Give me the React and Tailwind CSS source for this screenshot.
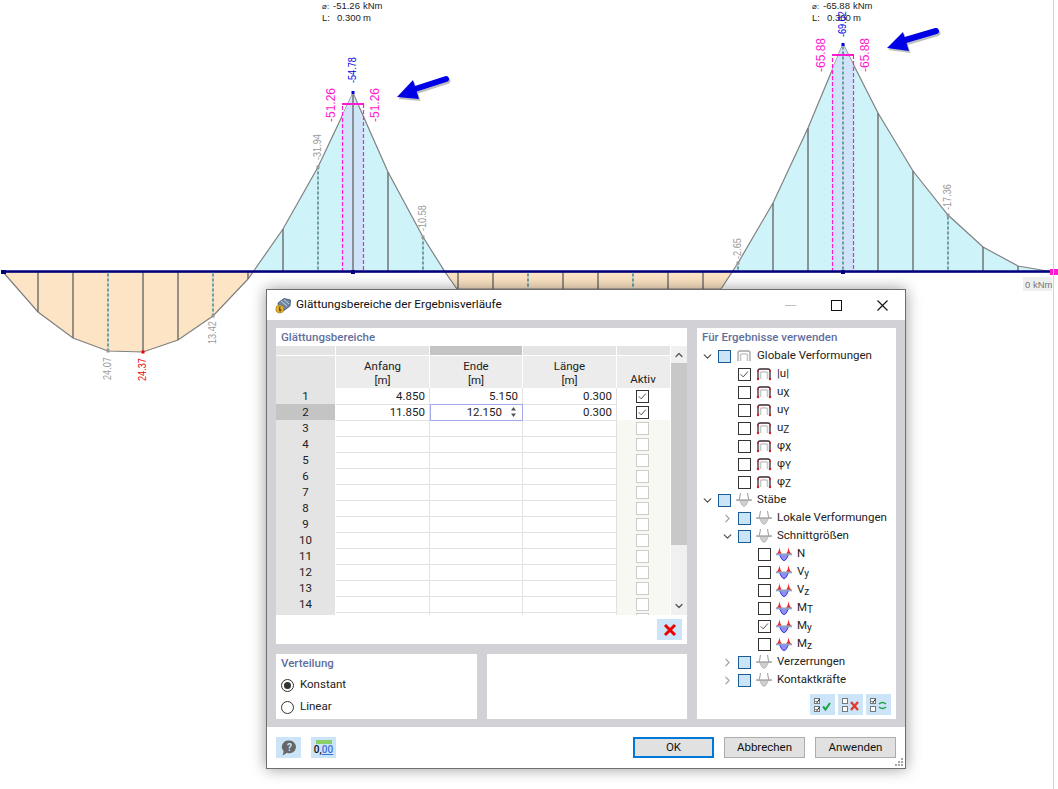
import React from "react";
import { ChevronDown, ChevronRight, ChevronUp } from "lucide-react";

const BASE = 271.5;

// values read off the diagram: [x, y, dashed]
const leftHump = [[38, 312], [73, 338], [108, 351, true], [143, 352], [178, 340], [213, 316, true], [248, 279]];
const midHump = [[283, 229], [318, 167, true], [353, 93], [388, 172], [423, 237, true]];
const flatPart = [[458, 289], [493, 289], [528, 289, true], [563, 289], [598, 289], [633, 289, true], [668, 289], [703, 289]];
const rightHump = [[738, 263, true], [773, 203], [808, 128], [843, 44, true], [878, 113], [913, 171], [948, 215, true], [983, 247], [1018, 266]];

const Verticals = ({ items }) =>
  items.map(([x, y, dashed]) => (
    <g key={x}>
      <line x1={x} y1={BASE} x2={x} y2={y} stroke={dashed ? "#3d7f84" : "#6b6b6b"} strokeWidth="1.4" />
      {dashed && <line x1={x} y1={BASE} x2={x} y2={y} stroke="#fff" strokeWidth="1.4" strokeDasharray="2 3" />}
    </g>
  ));

const VText = ({ x, y, size = 10.5, squeeze = 0.87, color = "#9a9a9a", children }) => (
  <text
    transform={`translate(${x} ${y}) rotate(-90) scale(${squeeze} 1)`}
    fontSize={size}
    fill={color}
    dominantBaseline="middle"
  >
    {children}
  </text>
);

const Arrow = ({ points, from, to }) => (
  <g>
    <g transform="translate(1.5 2)" opacity="0.25">
      <line x1={from[0]} y1={from[1]} x2={to[0]} y2={to[1]} stroke="#000" strokeWidth="6" strokeLinecap="round" />
      <polygon points={points} fill="#000" />
    </g>
    <line x1={from[0]} y1={from[1]} x2={to[0]} y2={to[1]} stroke="#0000e6" strokeWidth="6" strokeLinecap="round" />
    <polygon points={points} fill="#0000e6" />
  </g>
);

const Diagram = () => (
  <svg className="absolute inset-0 font-['Liberation_Sans',sans-serif]" width="1058" height="789" viewBox="0 0 1058 789">
    <line x1="1053.5" y1="0" x2="1053.5" y2="789" stroke="#d4d4d4" />

    <polygon points="3,272 38,312 73,338 108,351 143,352 178,340 213,316 248,279 253,272" fill="#fce4c4" stroke="#808080" strokeWidth="1.2" />
    <polygon points="445,272 457,289 721,289 732,272" fill="#fce4c4" stroke="#808080" strokeWidth="1.2" />
    <polygon points="253,272 283,229 318,167 353,93 388,172 423,237 445,272" fill="#cef3f9" stroke="#808080" strokeWidth="1.2" />
    <polygon points="732,272 738,263 773,203 808,128 843,44 878,113 913,171 948,215 983,247 1018,266 1053,272" fill="#cef3f9" stroke="#808080" strokeWidth="1.2" />
    <polygon points="342,272 342,116 353,93 363,121 363,272" fill="#cfe4f8" />
    <polygon points="832,272 832,70 843,44 853,64 853,272" fill="#cfe4f8" />

    <Verticals items={leftHump} />
    <Verticals items={midHump} />
    <Verticals items={flatPart} />
    <Verticals items={rightHump} />

    {/* smoothing areas */}
    <g stroke="#ff19d0" strokeWidth="1.2" fill="none" strokeDasharray="4 2">
      <path d="M342.5 272V104M363.5 104V272" />
      <path d="M832.5 272V55M853.5 55V272" />
    </g>
    <path d="M342 104H364M832 55H854" stroke="#ff19d0" strokeWidth="2" />

    <line x1="3" y1={BASE} x2="1053" y2={BASE} stroke="#00007f" strokeWidth="2.4" />

    <rect x="1" y="270" width="5" height="4" fill="#00007f" />
    <rect x="351" y="270" width="4" height="4" fill="#00007f" />
    <rect x="841" y="270" width="4" height="4" fill="#00007f" />
    <rect x="351.5" y="91" width="3" height="3" fill="#0000e6" />
    <rect x="841.5" y="43" width="3" height="3" fill="#0000e6" />
    <rect x="141.5" y="350.5" width="3" height="3" fill="#f00000" />
    {[[108, 351], [213, 316], [318, 167], [423, 237], [738, 263], [948, 215]].map(([x, y]) => (
      <rect key={x} x={x - 1.5} y={y - 1.5} width="3" height="3" fill="#999" />
    ))}
    <rect x="1050" y="269" width="3" height="6" fill="#ff19d0" />
    <rect x="1054" y="269" width="4" height="6" fill="#ff19d0" />

    <g fontSize="9.5" fill="#222">
      <text x="322" y="9" fontSize="8">⌀:</text>
      <text x="333" y="9">-51.26</text>
      <text x="363" y="9">kNm</text>
      <text x="322" y="21">L:</text>
      <text x="337" y="21">0.300</text>
      <text x="363" y="21">m</text>
      <text x="812" y="9" fontSize="8">⌀:</text>
      <text x="823" y="9">-65.88</text>
      <text x="853" y="9">kNm</text>
      <text x="812" y="21">L:</text>
      <text x="827" y="21">0.300</text>
      <text x="853" y="21">m</text>
    </g>

    <VText x={353} y={83} color="#0000e6">-54.78</VText>
    <VText x={843} y={37} color="#0000e6">-69.02</VText>
    <VText x={331.5} y={122} size={12} squeeze={1} color="#ff19d0">-51.26</VText>
    <VText x={375.5} y={122} size={12} squeeze={1} color="#ff19d0">-51.26</VText>
    <VText x={821.5} y={72} size={12} squeeze={1} color="#ff19d0">-65.88</VText>
    <VText x={865.5} y={72} size={12} squeeze={1} color="#ff19d0">-65.88</VText>
    <VText x={318} y={160}>-31.94</VText>
    <VText x={423} y={231}>-10.58</VText>
    <VText x={738} y={259}>-2.65</VText>
    <VText x={948} y={210}>-17.36</VText>
    <VText x={108} y={380}>24.07</VText>
    <VText x={143} y={381} color="#f00000">24.37</VText>
    <VText x={213} y={344}>13.42</VText>

    <Arrow from={[446, 79]} to={[412, 90]} points="397,97 413,80 419,99" />
    <Arrow from={[936, 31]} to={[902, 41]} points="887,48 903,32 909,51" />

    <rect x="1023" y="277" width="29" height="14" fill="#efefef" />
    <text x="1025" y="288" fontSize="9.5" fill="#777">0 kNm</text>
  </svg>
);

const Check = ({ className = "stroke-[#444]" }) => (
  <svg viewBox="0 0 13 13" className="w-full h-full">
    <path d="M2 6.3 5 9.3 10.5 3" fill="none" strokeWidth="1.1" className={className} />
  </svg>
);

const CheckBox = ({ checked, disabled }) => (
  <span
    className={`block w-[13px] h-[13px] shrink-0 border bg-white ${
      disabled ? "border-[#cccccc]" : "border-[#333333]"
    }`}
  >
    {checked && <Check />}
  </span>
);

const TriBox = () => <span className="block w-[13px] h-[13px] shrink-0 border border-[#1b5c96] bg-[#cce4f7]" />;

const FrameIcon = ({ active }) => (
  <svg width="16" height="14" viewBox="0 0 16 14" className="shrink-0">
    <path d="M4.5 12V5.5Q8 4 11.5 5.5V12" fill="none" stroke="#c8c8c8" strokeWidth="1.6" />
    <path
      d="M2 12V4Q2 2 4 2H12Q14 2 14 4V12"
      fill="none"
      stroke={active ? "#3d2a30" : "#a4a4a4"}
      strokeWidth="1.3"
    />
    {active && (
      <g fill="#c8202c">
        <circle cx="2" cy="4" r="1" />
        <circle cx="14" cy="4" r="1" />
        <circle cx="2" cy="12" r="1.2" />
        <circle cx="14" cy="12" r="1.2" />
      </g>
    )}
  </svg>
);

const MemberIcon = () => (
  <svg width="16" height="14" viewBox="0 0 16 14" className="shrink-0">
    <path d="M3.5 7Q8 20 12.5 7Z" fill="#cfcfcf" stroke="#b4b4b4" strokeWidth="0.8" />
    <path d="M.5 7H3Q4 4 4.5 0M15.5 7H13Q12 4 11.5 0" fill="none" stroke="#a4a4a4" strokeWidth="1.1" />
    <rect x="0" y="6.5" width="16" height="1.2" fill="#a4a4a4" />
  </svg>
);

const ForceIcon = () => (
  <svg width="16" height="14" viewBox="0 0 16 14" className="shrink-0">
    <path d="M.5 7Q3 5 3.5 0 4 5 6 7Z" fill="#f02a2a" />
    <path d="M10 7Q12 5 12.5 0 13 5 15.5 7Z" fill="#f02a2a" />
    <path d="M3.5 7.5Q8 20 12.5 7.5Z" fill="#8f8ff0" stroke="#3a3ae8" strokeWidth="1" />
    <rect x="0" y="6.5" width="16" height="1.8" fill="#8ea3c8" />
  </svg>
);

const Sub = ({ children }) => <span className="text-[10px] relative top-[2px]">{children}</span>;

const TreeRow = ({ indent, open, closed, box, icon, children }) => (
  <div className={`flex items-center h-[18px] ${indent}`}>
    <span className="w-[14px] flex justify-center shrink-0">
      {open && <ChevronDown size={13} strokeWidth={2.4} className="text-[#555]" />}
      {closed && <ChevronRight size={13} strokeWidth={2.4} className="text-[#aaa]" />}
    </span>
    <span className="ml-1">{box}</span>
    <span className="ml-[5px] flex">{icon}</span>
    <span className="ml-[5px] whitespace-nowrap text-[#222]">{children}</span>
  </div>
);

const ResultTree = () => {
  const globals = [
    ["|u|", null, true],
    ["u", "X"],
    ["u", "Y"],
    ["u", "Z"],
    ["φ", "X"],
    ["φ", "Y"],
    ["φ", "Z"],
  ];
  const forces = [
    ["N", null],
    ["V", "y"],
    ["V", "z"],
    ["M", "T"],
    ["M", "y", true],
    ["M", "z"],
  ];
  return (
    <div>
      <TreeRow indent="pl-[3px]" open box={<TriBox />} icon={<FrameIcon />}>
        Globale Verformungen
      </TreeRow>
      {globals.map(([a, b, c]) => (
        <TreeRow key={a + b} indent="pl-[23px]" box={<CheckBox checked={c} />} icon={<FrameIcon active />}>
          {a}
          {b && <Sub>{b}</Sub>}
        </TreeRow>
      ))}
      <TreeRow indent="pl-[3px]" open box={<TriBox />} icon={<MemberIcon />}>
        Stäbe
      </TreeRow>
      <TreeRow indent="pl-[23px]" closed box={<TriBox />} icon={<MemberIcon />}>
        Lokale Verformungen
      </TreeRow>
      <TreeRow indent="pl-[23px]" open box={<TriBox />} icon={<MemberIcon />}>
        Schnittgrößen
      </TreeRow>
      {forces.map(([a, b, c]) => (
        <TreeRow key={a + b} indent="pl-[43px]" box={<CheckBox checked={c} />} icon={<ForceIcon />}>
          {a}
          {b && <Sub>{b}</Sub>}
        </TreeRow>
      ))}
      <TreeRow indent="pl-[23px]" closed box={<TriBox />} icon={<MemberIcon />}>
        Verzerrungen
      </TreeRow>
      <TreeRow indent="pl-[23px]" closed box={<TriBox />} icon={<MemberIcon />}>
        Kontaktkräfte
      </TreeRow>
    </div>
  );
};

const rows = [
  ["4.850", "5.150", "0.300", true],
  ["11.850", "12.150", "0.300", true],
  ...Array.from({ length: 13 }, () => ["", "", "", false]),
];

const GRID = "grid grid-cols-[60px_94px_93px_94px_53px]";

const SmoothingTable = () => (
  <div className="flex">
    <div className="w-[394px]">
      <div className={GRID}>
        <div className="h-[10px] border-r border-b border-white bg-[#e4e4e4]" />
        <div className="h-[10px] border-r border-b border-white bg-[#e4e4e4]" />
        <div className="h-[10px] border-r border-b border-white bg-[#c4c4c4]" />
        <div className="h-[10px] border-r border-b border-white bg-[#e4e4e4]" />
        <div className="h-[10px] border-b border-white bg-[#e4e4e4]" />
      </div>
      <div className={`${GRID} h-8 text-center leading-[14px] text-[#222]`}>
        <div className="border-r border-white bg-[#e4e4e4]" />
        {["Anfang", "Ende", "Länge"].map((label) => (
          <div key={label} className="bg-[#ececec] border-r border-white pt-[3px]">
            {label}
            <br />
            [m]
          </div>
        ))}
        <div className="bg-[#ececec] flex items-end justify-center pb-[2px] pr-px">Aktiv</div>
      </div>
      <div className="h-[227px] overflow-hidden">
        {rows.map(([start, end, length, active], i) => (
          <div key={i} className={`${GRID} h-4 leading-[16px] text-[#222]`}>
            <div
              className={`text-center border-r border-b border-white ${
                i === 1 ? "bg-[#c4c4c4]" : "bg-[#e4e4e4]"
              }`}
            >
              {i < 14 && i + 1}
            </div>
            <div className="text-right pr-1 border-r border-b border-[#e2e2e2]">{start}</div>
            {i === 1 ? (
              <div className="relative text-right pr-5 border border-[#a3a8ea] leading-[15px]">
                {end}
                <svg width="7" height="10" viewBox="0 0 7 10" className="absolute right-[5px] top-[2px]">
                  <path d="M3.5 0 6 3.5H1ZM3.5 10 6 6.5H1Z" fill="#555" />
                </svg>
              </div>
            ) : (
              <div className="text-right pr-1 border-r border-b border-[#e2e2e2]">{end}</div>
            )}
            <div className="text-right pr-1 border-r border-b border-[#e2e2e2]">{length}</div>
            <div
              className={`flex items-center justify-center pr-[2px] border-b border-[#e2e2e2] ${
                i > 1 ? "bg-[#f7f8f2]" : "bg-white"
              }`}
            >
              <CheckBox checked={active} disabled={i > 1} />
            </div>
          </div>
        ))}
      </div>
    </div>
    <div className="ml-px w-4 bg-[#f0f0f0] flex flex-col">
      <div className="h-[17px] flex items-center justify-center">
        <ChevronUp size={12} strokeWidth={2.6} className="text-[#555]" />
      </div>
      <div className="h-[182px] bg-[#c8c8c8]" />
      <div className="flex-1 flex items-end justify-center pb-[3px]">
        <ChevronDown size={12} strokeWidth={2.6} className="text-[#555]" />
      </div>
    </div>
  </div>
);

const IconButton = ({ children }) => (
  <button className="w-[25px] h-[21px] bg-[#cce4f7] flex items-center justify-center">{children}</button>
);

const MiniBoxes = ({ top, bottom, children }) => (
  <svg width="20" height="16" viewBox="0 0 20 16">
    <rect x="1.5" y="1.5" width="5" height="5" fill="#fff" stroke="#777" />
    <rect x="1.5" y="9.5" width="5" height="5" fill="#fff" stroke="#777" />
    {top && <path d="M2.5 4 4 5.5 6.5 2" fill="none" stroke="#222" />}
    {bottom && <path d="M2.5 12 4 13.5 6.5 10" fill="none" stroke="#222" />}
    {children}
  </svg>
);

const RedCross = ({ size = 14 }) => (
  <svg width={size} height={size} viewBox="0 0 14 14">
    <path d="M2 2 12 12M12 2 2 12" stroke="#f00000" strokeWidth="3" />
  </svg>
);

const PushButton = ({ primary, children }) => (
  <button
    className={`w-[81px] h-[21px] bg-[#e1e1e1] text-[#111] leading-none ${
      primary ? "border-2 border-[#0078d7]" : "border border-[#adadad]"
    }`}
  >
    {children}
  </button>
);

const Radio = ({ checked, children }) => (
  <label className="flex items-center h-[22px] gap-[6px] text-[#222]">
    <span className="w-[13px] h-[13px] rounded-full border border-[#333] bg-white flex items-center justify-center">
      {checked && <span className="w-[7px] h-[7px] rounded-full bg-[#333]" />}
    </span>
    {children}
  </label>
);

const sectionTitle = "font-medium text-[#5f6f9e]";

const Dialog = () => (
  <div className="absolute left-[266px] top-[289px] w-[640px] h-[480px] bg-white border border-[#6e6e6e] shadow-[0_0_14px_rgba(0,0,0,0.4)] flex flex-col text-[11.5px] font-['Roboto',sans-serif]">
    <div className="h-[30px] flex items-center pl-[8px] pr-[17px] shrink-0">
      <svg width="17" height="17" viewBox="0 0 17 17" className="shrink-0">
        <path d="M3 6 9 1.5 15.5 3 15 9 9 13.5 4 12Z" fill="#6e86a8" stroke="#3d4c66" strokeWidth="0.8" />
        <path d="M6 4 12 9M9 2.5 14 7" stroke="#c5d2e2" strokeWidth="1" />
        <circle cx="4.8" cy="12" r="4" fill="#e7b52f" stroke="#8f6b12" strokeWidth="0.6" />
        <path d="M5.8 10H4.4V14H5.8V12H4.4" fill="none" stroke="#5b4106" strokeWidth="0.9" />
      </svg>
      <span className="ml-[4px] text-[11.8px] text-[#111] whitespace-nowrap">Glättungsbereiche der Ergebnisverläufe</span>
      <div className="ml-auto flex items-center gap-[35px]">
        <span className="w-[11px] h-px bg-[#bdbdbd]" />
        <span className="w-[11px] h-[11px] border-[1.5px] border-[#111]" />
        <svg width="11" height="11" viewBox="0 0 11 11">
          <path d="M.5.5 10.5 10.5M10.5.5.5 10.5" stroke="#111" strokeWidth="1.1" />
        </svg>
      </div>
    </div>

    <div className="flex-1 bg-[#d1d1d6] px-[9px] pt-[8px] pb-[8px] flex gap-[10px]">
      <div className="w-[411px] flex flex-col gap-[10px]">
        <div className="bg-white h-[316px] flex flex-col">
          <div className={`h-[18px] px-[5px] leading-[18px] ${sectionTitle}`}>Glättungsbereiche</div>
          <SmoothingTable />
          <div className="flex justify-end pt-[4px] pr-[5px]">
            <IconButton>
              <RedCross />
            </IconButton>
          </div>
        </div>
        <div className="flex-1 flex gap-[10px]">
          <div className="w-[201px] bg-white px-[5px]">
            <div className={`h-[20px] leading-[19px] ${sectionTitle}`}>Verteilung</div>
            <Radio checked>Konstant</Radio>
            <Radio>Linear</Radio>
          </div>
          <div className="flex-1 bg-white" />
        </div>
      </div>

      <div className="w-[200px] bg-white flex flex-col">
        <div className={`h-[19px] px-[5px] leading-[18px] ${sectionTitle}`}>Für Ergebnisse verwenden</div>
        <ResultTree />
        <div className="flex justify-end gap-[3px] pr-[5px] mt-[5px]">
          <IconButton>
            <MiniBoxes top bottom>
              <path d="M10 9.5 12.5 12.5 17 6" fill="none" stroke="#1fa348" strokeWidth="2" />
            </MiniBoxes>
          </IconButton>
          <IconButton>
            <MiniBoxes>
              <path d="M10 5 17 13M17 5 10 13" stroke="#e23a2e" strokeWidth="2.4" />
            </MiniBoxes>
          </IconButton>
          <IconButton>
            <MiniBoxes top>
              <path d="M10 7Q13.5 4 17 7M17 10Q13.5 13 10 10" fill="none" stroke="#1fa348" strokeWidth="1.5" />
            </MiniBoxes>
          </IconButton>
        </div>
      </div>
    </div>

    <div className="h-[41px] shrink-0 relative flex items-center px-[9px]">
      <button className="w-[25px] h-[21px] bg-[#cce4f7] flex items-center justify-center">
        <svg width="16" height="16" viewBox="0 0 15 15">
          <path d="M8 .5a6 6 0 1 1-2.4 11.5L1.5 14.5l1-4A6 6 0 0 1 8 .5Z" fill="#666" />
          <text x="8" y="10" fontSize="9.5" fontWeight="700" fill="#cce4f7" textAnchor="middle">?</text>
        </svg>
      </button>
      <button className="ml-[10px] w-[25px] h-[21px] bg-[#cce4f7] flex flex-col items-center justify-center leading-none">
        <span className="block w-4 h-[4px] bg-[#8ccf6a]" />
        <span className="text-[10px] font-medium text-[#111] mt-px">
          0,<span className="underline text-[#3a6fd8]">00</span>
        </span>
      </button>
      <div className="ml-auto flex gap-[10px]">
        <PushButton primary>OK</PushButton>
        <PushButton>Abbrechen</PushButton>
        <PushButton>Anwenden</PushButton>
      </div>
      <svg width="10" height="10" viewBox="0 0 10 10" className="absolute right-px bottom-px">
        <g fill="#a8a8a8">
          <rect x="7" y="1" width="2" height="2" />
          <rect x="4" y="4" width="2" height="2" />
          <rect x="7" y="4" width="2" height="2" />
          <rect x="1" y="7" width="2" height="2" />
          <rect x="4" y="7" width="2" height="2" />
          <rect x="7" y="7" width="2" height="2" />
        </g>
      </svg>
    </div>
  </div>
);

export default function App() {
  return (
    <div className="relative w-[1058px] h-[789px] overflow-hidden bg-white">
      <Diagram />
      <Dialog />
    </div>
  );
}
